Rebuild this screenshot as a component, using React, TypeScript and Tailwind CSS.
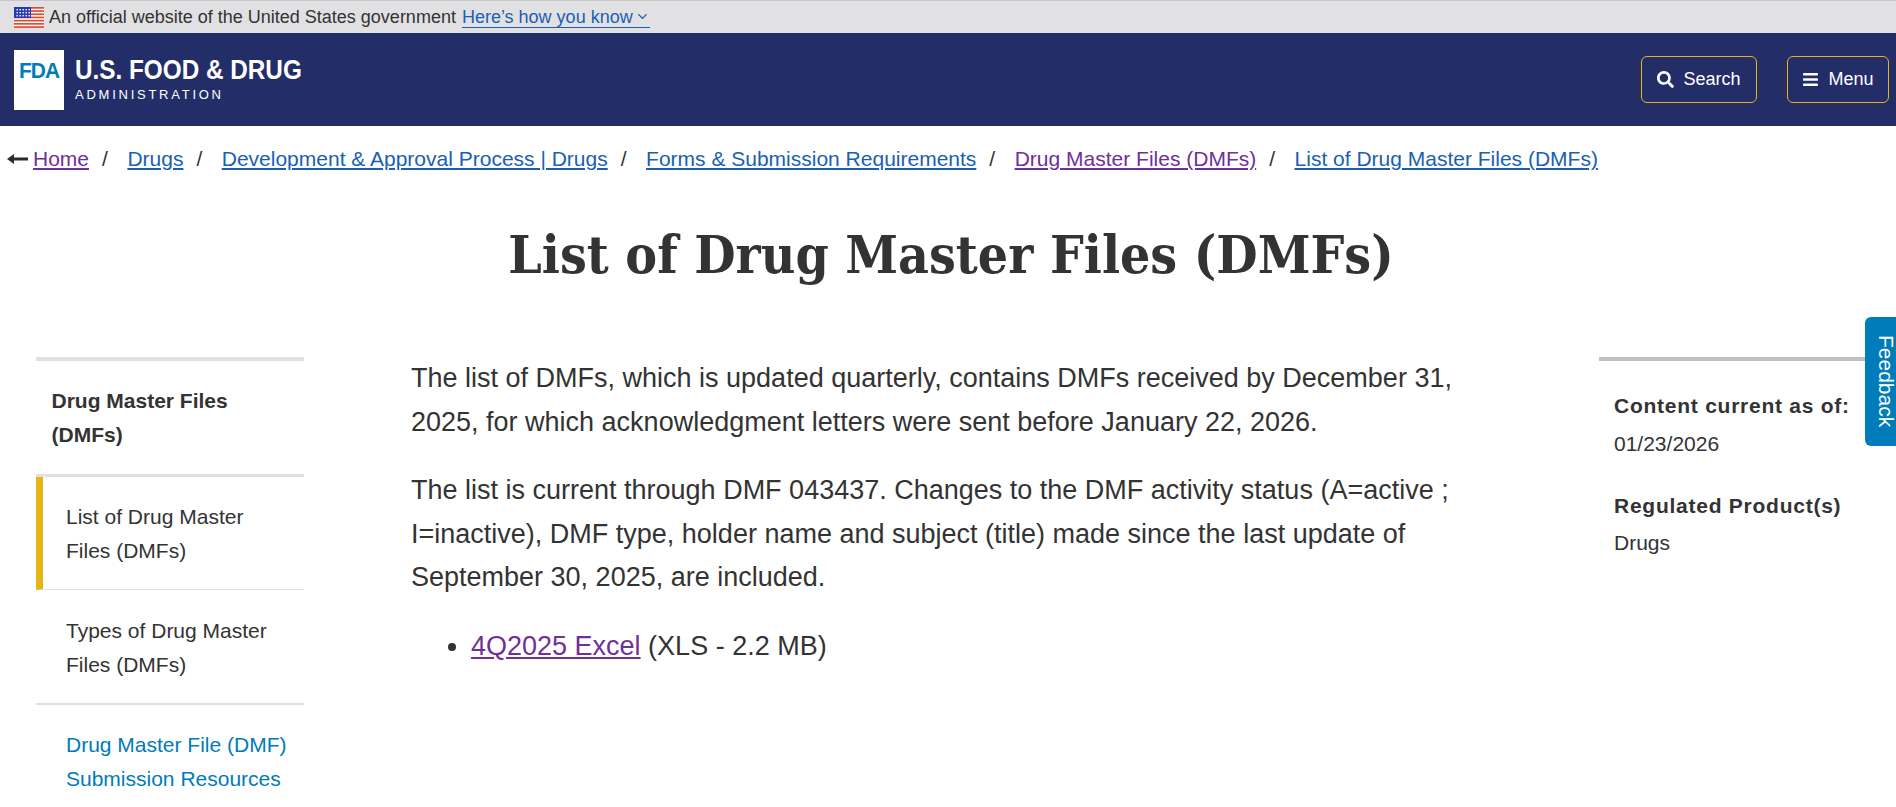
import { ChevronDown } from "lucide-react";
import { FaBars, FaSearch } from "react-icons/fa";

const crumbs = [
  { label: "Home", visited: true },
  { label: "Drugs" },
  { label: "Development & Approval Process | Drugs" },
  { label: "Forms & Submission Requirements" },
  { label: "Drug Master Files (DMFs)", visited: true },
  { label: "List of Drug Master Files (DMFs)" },
];

function Flag() {
  return (
    <svg width="30" height="21" viewBox="0 0 30 21" aria-hidden>
      <rect width="30" height="21" fill="#fff" />
      {[0, 3.2, 6.4, 9.6, 12.8, 16, 19.2].map((y) => (
        <rect key={y} y={y} width="30" height="1.7" fill="#e04a2f" />
      ))}
      <rect width="17" height="11" fill="#2a3ab0" />
      {[2, 5, 8].map((y) =>
        [2.5, 5.5, 8.5, 11.5, 14.5].map((x) => (
          <rect key={`${x}-${y}`} x={x} y={y} width="1.4" height="1.4" fill="#fff" />
        ))
      )}
    </svg>
  );
}

function BackArrow() {
  return (
    <svg width="21" height="12" viewBox="0 0 21 12" aria-hidden>
      <path d="M0 6 L7 1 V4.5 H21 V7.5 H7 V11 Z" fill="#2e2a26" />
    </svg>
  );
}

export default function App() {
  return (
    <div className="relative h-[807px] overflow-hidden bg-white font-['Liberation_Sans',sans-serif] text-[#333]">
      {/* Gov banner */}
      <div className="flex h-[33px] items-center border-t border-[#c9c9cb] bg-[#e1e1e3] pl-[14px] text-[18px]">
        <Flag />
        <span className="ml-[5px]">An official website of the United States government</span>
        <a className="ml-[6px] flex items-center border-b border-[#1a5fb4] leading-[20px] text-[#1a5fb4]">
          Here’s how you know
          <ChevronDown className="ml-[2px] h-[15px] w-[15px]" strokeWidth={2.25} />
        </a>
      </div>

      {/* Header */}
      <header className="flex h-[93px] items-center justify-between bg-[#232e69] pl-[14px] pr-[7px]">
        <div className="flex items-center">
          <div className="flex h-[60px] w-[50px] items-center justify-center bg-white pb-[19px]">
            <span className="scale-x-[0.95] text-[22px] font-bold tracking-[-1px] text-[#007cba]">FDA</span>
          </div>
          <div className="ml-[11px] text-white">
            <div className="origin-left scale-x-[0.9] text-[27px] leading-[28px] font-bold whitespace-nowrap">U.S. FOOD &amp; DRUG</div>
            <div className="mt-[3px] text-[13px] leading-[16px] tracking-[2.75px]">ADMINISTRATION</div>
          </div>
        </div>
        <div className="flex items-center gap-[30px] text-[18px] text-white">
          <button className="flex h-[47px] w-[116px] items-center justify-center gap-[9px] rounded-[6px] border border-[#e5b611]">
            <FaSearch className="h-[17px] w-[17px]" />
            Search
          </button>
          <button className="flex h-[47px] w-[102px] items-center justify-center gap-[9px] rounded-[6px] border border-[#e5b611]">
            <FaBars className="h-[17px] w-[17px]" />
            Menu
          </button>
        </div>
      </header>

      {/* Breadcrumb */}
      <nav className="flex h-[66px] items-center pl-[7px] text-[21px]">
        <BackArrow />
        <span className="ml-[5px] flex items-center">
          {crumbs.map((c, i) => (
            <span key={c.label} className="flex items-center">
              <a className={`underline ${c.visited ? "text-[#702f9a]" : "text-[#1a5fb4]"}`}>{c.label}</a>
              {i < crumbs.length - 1 && <span className="mr-[19.5px] ml-[13px]">/</span>}
            </span>
          ))}
        </span>
      </nav>

      <h1 className="mt-[26px] pl-[6px] text-center font-['DejaVu_Serif',serif] text-[53px] leading-[72px] font-bold text-[#333] [font-stretch:condensed]">
        List of Drug Master Files (DMFs)
      </h1>

      {/* Columns */}
      <div className="mt-[67px] flex items-start pl-[36px]">
        <aside className="w-[268px] shrink-0 border-t-4 border-[#dfe1e2] text-[21px] leading-[34px]">
          <div className="border-b-[3px] border-[#dfe1e2] px-[15.5px] pt-[23px] pb-[22px] font-bold">
            Drug Master Files (DMFs)
          </div>
          <div className="border-b border-l-[7px] border-[#e0e0e0] border-l-[#e5b611] pt-[23px] pr-[16px] pb-[21px] pl-[23px]">
            <span className="block w-[190px]">List of Drug Master Files (DMFs)</span>
          </div>
          <div className="border-b-2 border-[#e0e0e0] pt-[24px] pr-[16px] pb-[21px] pl-[30px]">Types of Drug Master Files (DMFs)</div>
          <a className="block pt-[23px] pr-[16px] pl-[30px] text-[#007cba]">Drug Master File (DMF) Submission Resources</a>
        </aside>

        <main className="ml-[107px] w-[1060px] shrink-0 text-[27px] leading-[43.5px]">
          <p>
            The list of DMFs, which is updated quarterly, contains DMFs received by December 31, 2025, for which acknowledgment letters were sent before January 22, 2026.
          </p>
          <p className="mt-[25px]">
            The list is current through DMF 043437. Changes to the DMF activity status (A=active ; I=inactive), DMF type, holder name and subject (title) made since the last update of September 30, 2025, are included.
          </p>
          <ul className="mt-[25px] list-disc pl-[60px]">
            <li>
              <a className="text-[#702f9a] underline">4Q2025 Excel</a> (XLS - 2.2 MB)
            </li>
          </ul>
        </main>

        <aside className="ml-[128px] flex-1 border-t-4 border-[#c0c0c0] pt-[30px] pl-[15px] text-[21px] leading-[30px]">
          <div className="font-bold tracking-[0.75px]">Content current as of:</div>
          <div className="mt-[8px]">01/23/2026</div>
          <div className="mt-[32px] font-bold tracking-[0.75px]">Regulated Product(s)</div>
          <div className="mt-[7px]">Drugs</div>
        </aside>
      </div>

      {/* Feedback tab */}
      <a className="absolute top-[317px] right-0 flex h-[129px] w-[31px] items-center justify-center rounded-l-[6px] bg-[#007cba] pl-[12px] text-[21px] leading-[19px] text-white [writing-mode:vertical-rl]">
        Feedback
      </a>
    </div>
  );
}
